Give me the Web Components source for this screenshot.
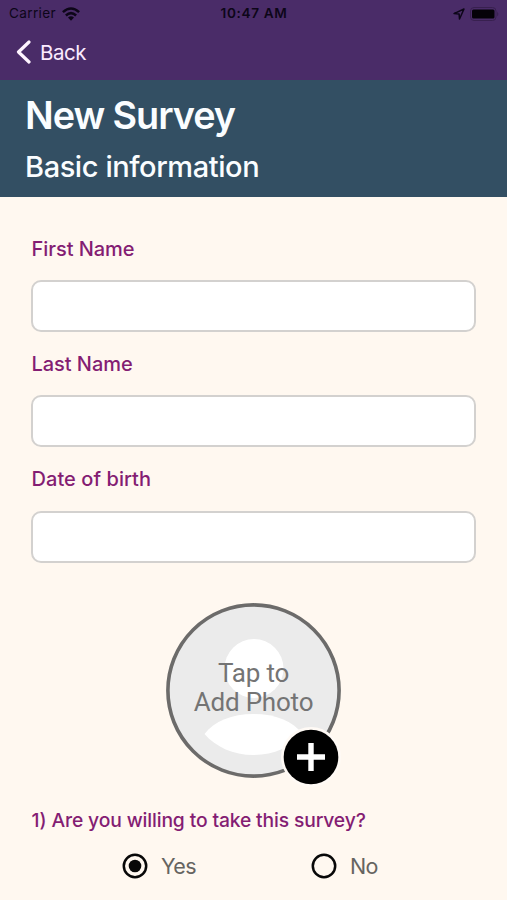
<!DOCTYPE html>
<html lang="en">
<head>
<meta charset="utf-8">
<title>New Survey</title>
<style>
html, body { margin: 0; height: 100%; }
body { background: #fff8f0; font-family: Inter, "Liberation Sans", sans-serif; overflow: hidden; }
</style>
</head>
<body>
<survey-screen></survey-screen>
<script>
const define = (name, html) => customElements.define(name, class extends HTMLElement {
  constructor() {
    super();
    const t = document.createElement('template');
    t.innerHTML = html;
    this.attachShadow({ mode: 'open' }).append(t.content.cloneNode(true));
  }
});

define('status-bar', `
<style>
:host { display: grid; grid-template-columns: 1fr auto 1fr; align-items: center; height: 27px; padding: 0 8px 0 9px; color: #0d0618; font-size: 13.6px; line-height: 27px; box-sizing: border-box; }
.left, .right { display: flex; align-items: center; }
.left { gap: 6px; }
.carrier { letter-spacing: .35px; }
.time { font-weight: 600; letter-spacing: .65px; }
.right { justify-content: flex-end; gap: 5px; }
svg { display: block; }
</style>
<div class="left"><span class="carrier">Carrier</span>
<svg width="18" height="14" viewBox="0 0 18 14"><g fill="none" stroke="#0d0618" stroke-width="2.5"><path d="M.9 5.2Q9-2.2 17.1 5.2"/><path d="M3.9 8.5Q9 3.7 14.1 8.5"/></g><path d="M6 10.6Q9 8 12 10.6L9 13.7Z" fill="#0d0618"/></svg></div>
<span class="time">10:47 AM</span>
<div class="right">
<svg width="12" height="12" viewBox="0 0 12 12"><path d="M1 5.6 11 1 6.5 11 6.1 6Z" fill="none" stroke="#0d0618" stroke-width="1.5" stroke-linejoin="round"/></svg>
<svg width="29" height="14" viewBox="0 0 29 14"><rect x=".5" y=".5" width="25.5" height="13" rx="3.5" fill="none" stroke="#38204f"/><rect x="2" y="2.5" width="22.5" height="9" rx="1.5" fill="#050208"/><path d="M27.2 4.7Q29.6 7 27.2 9.3Z" fill="#38204f"/></svg></div>`);

define('nav-back', `
<style>
:host { display: flex; align-items: center; height: 53px; padding: 0 16px 3px; gap: 9px; color: #fbeaff; font-size: 20.5px; box-sizing: border-box; }
svg { display: block; }
span { letter-spacing: -.5px; }
</style>
<svg width="15" height="24" viewBox="0 0 15 24"><path d="M13 2 2.5 12 13 22" fill="none" stroke="#fff4ff" stroke-width="3.2" stroke-linecap="round" stroke-linejoin="round"/></svg>
<span><slot></slot></span>`);

define('page-heading', `
<style>
:host { display: block; height: 117px; padding: 10px 25px 0; background: #334f63; color: #fafdff; box-sizing: border-box; }
h1, h2 { margin: 0; white-space: nowrap; }
h1 { font-size: 37.8px; line-height: 50px; font-weight: 600; letter-spacing: -1.05px; }
h2 { font-size: 29px; line-height: 50px; font-weight: 450; letter-spacing: -.42px; margin-top: 2px; }
</style>
<h1><slot></slot></h1><h2><slot name="sub"></slot></h2>`);

define('text-field', `
<style>
:host { display: block; height: 115.2px; }
label { display: block; }
span { display: block; height: 43.2px; line-height: 24px; padding-left: .5px; color: #841d73; font-size: 20px; font-weight: 500; letter-spacing: var(--track, -.05px); box-sizing: border-box; }
input { display: block; width: 100%; height: 52px; margin: 0; padding: 0 12px; border: 2px solid #d3d1cf; border-radius: 10px; background: #fff; font: inherit; box-sizing: border-box; outline: 0; }
</style>
<label><span><slot></slot></span><input type="text"></label>`);

define('photo-picker', `
<style>
:host { display: block; position: relative; width: 175px; height: 175px; margin: 20.7px auto 0; font-family: Roboto, "Liberation Sans", sans-serif; color: #747474; }
svg { display: block; overflow: visible; }
.label { position: absolute; inset: 56px 0 auto; text-align: center; font-size: 26px; line-height: 29px; letter-spacing: -.2px; white-space: nowrap; }
.badge { position: absolute; left: 115.5px; top: 124.5px; }
</style>
<svg width="175" height="175" viewBox="0 0 175 175">
<circle cx="87.5" cy="87.5" r="85.6" fill="#ebebeb" stroke="#6c6b6a" stroke-width="3.6"/>
<circle cx="88" cy="65.5" r="29.5" fill="#fff"/>
<path d="M38.5 131C48 118 66 111 87.500 111S127 118 136.500 131C125 144 108 152 87.500 152S50 144 38.500 131Z" fill="#fff"/></svg>
<div class="label">Tap to<br>Add Photo</div>
<svg class="badge" width="58" height="58" viewBox="0 0 58 58"><circle cx="29" cy="29" r="30" fill="#fffaf5"/><circle cx="29" cy="29" r="27.300" fill="#000"/><path d="M29 15V43M15 29H43" stroke="#fff" stroke-width="5.400"/></svg>`);

define('radio-option', `
<style>
:host { display: flex; align-items: center; gap: 13px; color: #666461; font-size: 21.5px; line-height: 28px; }
svg { display: block; }
.dot { display: none; }
:host([checked]) .dot { display: block; }
span { letter-spacing: var(--track, -.6px); }
</style>
<svg width="26" height="26" viewBox="0 0 26 26"><circle cx="13" cy="13" r="11.200" fill="none" stroke="#080808" stroke-width="2.500"/><circle class="dot" cx="13" cy="13" r="6.300" fill="#080808"/></svg>
<span><slot></slot></span>`);

define('survey-question', `
<style>
:host { display: block; margin-top: 29.5px; }
p { margin: 0; padding-left: .5px; color: #841d73; font-size: 19.3px; line-height: 24px; font-weight: 500; letter-spacing: -.14px; white-space: nowrap; }
.options { display: grid; grid-template-columns: 189px 1fr; padding-left: 91px; margin-top: 20px; }
</style>
<p><slot></slot></p><div class="options"><slot name="option"></slot></div>`);

define('survey-screen', `
<style>
:host { display: block; }
header { background: #4a2c68; }
main { padding: 40px 31px 0; }
</style>
<header><status-bar></status-bar><nav-back>Back</nav-back></header>
<page-heading>New Survey<span slot="sub">Basic information</span></page-heading>
<main>
<text-field>First Name</text-field>
<text-field>Last Name</text-field>
<text-field style="--track: .06px">Date of birth</text-field>
<photo-picker></photo-picker>
<survey-question>1) Are you willing to take this survey?
<radio-option slot="option" checked>Yes</radio-option>
<radio-option slot="option">No</radio-option></survey-question>
</main>`);
</script>
</body>
</html>
